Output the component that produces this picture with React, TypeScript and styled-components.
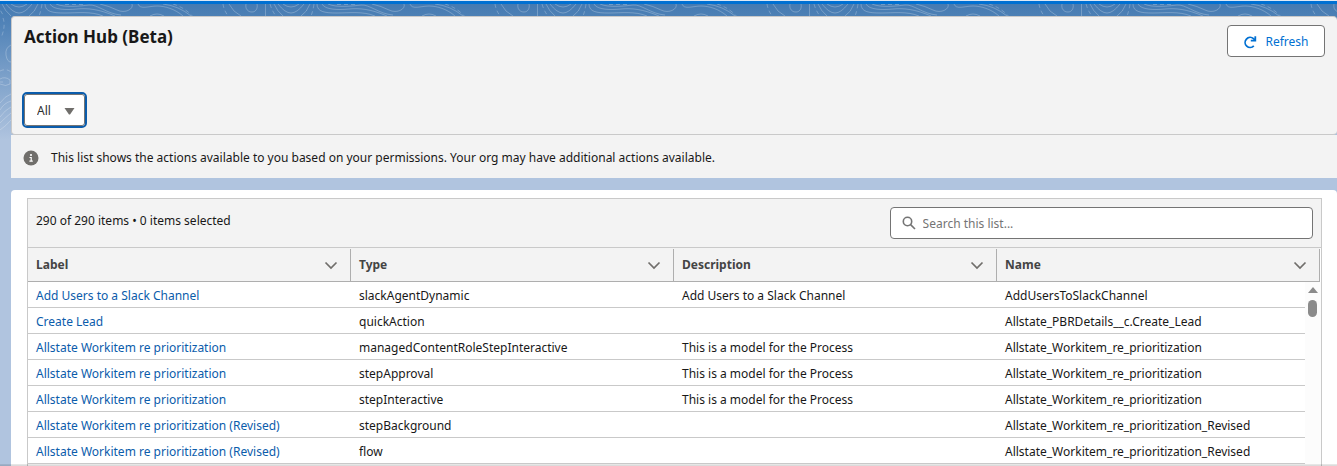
import React from "react";
import styled, { createGlobalStyle } from "styled-components";

const Global = createGlobalStyle`
  * { box-sizing: border-box; }
  body { margin: 0; background: #b0c4df; color: #181818; font: 12px/20px "Noto Sans", "Open Sans", sans-serif; }
  html, body, #root { height: 100%; }
  html, body { overflow: hidden; }
`;

const Page = styled.div`
  position: relative;
  isolation: isolate;
  height: 100%;
  display: flex;
  flex-direction: column;
  gap: 12px;
  padding-left: 11px;
`;

const Backdrop = styled.svg`
  position: absolute;
  z-index: -1;
  top: 0;
  left: 0;
  width: 100%;
  height: 140px;
`;

const BottomShade = styled.div`
  position: absolute;
  left: 0;
  right: 0;
  bottom: 0;
  height: 2px;
  background: linear-gradient(rgba(0, 0, 0, 0.08), rgba(0, 0, 0, 0.16));
`;

const TopStripe = styled.div`
  height: 4px;
  margin-left: -11px;
  border-top: 1px solid #dfe9f5;
  background: #0070d2;
`;

const PageHeader = styled.header`
  display: flex;
  justify-content: space-between;
  align-items: flex-start;
  height: 119px;
  padding: 8px 12px;
  border: 1px solid #c9c9c9;
  border-right: 0;
  border-radius: 4px;
  background: #f3f3f3;
`;

const HeaderLeft = styled.div`
  display: flex;
  flex-direction: column;
  justify-content: space-between;
  align-items: flex-start;
  height: 100%;
`;

const Title = styled.h1`
  margin: 0;
  font-size: 17px;
  line-height: 24px;
  font-weight: 700;
`;

const FilterBox = styled.div`
  position: relative;
  display: flex;
`;

const FilterSelect = styled.select`
  appearance: none;
  width: 61px;
  height: 32px;
  padding: 2px 12px 0;
  border: 1px solid #747474;
  border-radius: 3px;
  outline: 2px solid #0b5cab;
  background: #fff;
  color: #2e2e2e;
  font: inherit;
`;

const Caret = styled.svg`
  position: absolute;
  right: 10px;
  top: 14px;
  pointer-events: none;
`;

const RefreshButton = styled.button`
  display: flex;
  align-items: center;
  justify-content: center;
  gap: 8px;
  width: 98px;
  height: 32px;
  padding: 2px 0 0;
  border: 1px solid #747474;
  border-radius: 4px;
  background: #fff;
  color: #0070d2;
  font: inherit;
`;

const Notice = styled.div`
  display: flex;
  align-items: center;
  gap: 12px;
  height: 43px;
  padding: 2px 12px 0;
  background: #f3f3f3;
`;

const HeaderArea = styled.div`
  padding-top: 12px;
`;

const Card = styled.main`
  flex: 1;
  min-height: 0;
  padding: 8px 15px 0 16px;
  border-radius: 4px 4px 0 0;
  background: #fff;
`;

const ListPanel = styled.section`
  height: 100%;
  border: 1px solid #c9c9c9;
  border-bottom: 0;
`;

const Toolbar = styled.div`
  display: flex;
  justify-content: space-between;
  height: 49px;
  padding: 8px;
  border-bottom: 1px solid #c9c9c9;
  background: #f3f3f3;
`;

const Count = styled.div`
  padding-top: 4px;
`;

const SearchField = styled.label`
  display: flex;
  align-items: center;
  gap: 7px;
  width: calc(33% + 2px);
  height: 32px;
  padding: 0 11px;
  border: 1px solid #747474;
  border-radius: 4px;
  background: #fff;
`;

const SearchInput = styled.input`
  flex: 1;
  min-width: 0;
  padding: 2px 0 0;
  border: 0;
  outline: 0;
  background: transparent;
  font: inherit;
  &::placeholder { color: #747474; opacity: 1; }
`;

const TableArea = styled.div`
  position: relative;
  padding-right: 1px;
`;

const Table = styled.table`
  width: 100%;
  table-layout: fixed;
  border-collapse: separate;
  border-spacing: 0;
`;

const HeadCell = styled.th`
  height: 34px;
  padding: 0;
  border-bottom: 1px solid #aeaeae;
  background: #f3f3f3;
  color: #444;
  font-weight: 700;
  text-align: left;
`;

const HeadInner = styled.div`
  display: flex;
  align-items: center;
  justify-content: space-between;
  height: 32px;
  padding: 0 12px 0 8px;
  border-right: 1px solid #aeaeae;
`;

const Cell = styled.td`
  height: 26px;
  padding: 2px 8px 0;
  border-bottom: 1px solid #c9c9c9;
  white-space: nowrap;
`;

const RowLink = styled.a`
  color: #0b5cab;
  text-decoration: none;
`;

const ScrollTrack = styled.div`
  position: absolute;
  top: 34px;
  right: 0;
  bottom: 0;
  width: 16px;
  padding: 5px 0 0 3px;
  background: #fcfcfc;
`;

const ScrollThumb = styled.div`
  width: 9px;
  height: 17px;
  margin-top: 7px;
  border-radius: 5px;
  background: #8b8b8b;
`;

const columns = ["Label", "Type", "Description", "Name"];
const rows = [
  ["Add Users to a Slack Channel", "slackAgentDynamic", "Add Users to a Slack Channel", "AddUsersToSlackChannel"],
  ["Create Lead", "quickAction", "", "Allstate_PBRDetails__c.Create_Lead"],
  ["Allstate Workitem re prioritization", "managedContentRoleStepInteractive", "This is a model for the Process", "Allstate_Workitem_re_prioritization"],
  ["Allstate Workitem re prioritization", "stepApproval", "This is a model for the Process", "Allstate_Workitem_re_prioritization"],
  ["Allstate Workitem re prioritization", "stepInteractive", "This is a model for the Process", "Allstate_Workitem_re_prioritization"],
  ["Allstate Workitem re prioritization (Revised)", "stepBackground", "", "Allstate_Workitem_re_prioritization_Revised"],
  ["Allstate Workitem re prioritization (Revised)", "flow", "", "Allstate_Workitem_re_prioritization_Revised"],
];

export default function App() {
  return (
    <Page>
      <Global />
      <Backdrop aria-hidden="true">
        <defs>
          <linearGradient id="sky" x1="0" y1="0" x2="0" y2="1">
            <stop offset="0" stopColor="#4379b0" />
            <stop offset="0.2" stopColor="#5485b9" />
            <stop offset="1" stopColor="#b0c4df" />
          </linearGradient>
          <pattern id="contours" x="265" y="0" width="272" height="140" patternUnits="userSpaceOnUse">
            <g fill="none" stroke="#fff" strokeOpacity="0.24">
              <path d="M.5 4V16M9 4Q12 11 18 16M13 4Q20 13 26 13T39 4M18 4Q26 10 34 4M45 4Q42 12 36 16" />
              <path d="M52 4C52 12 60 13 72 13S98 11 110 16M57 4C60 10 74 10 84 9S106 9 122 16M63 4C72 8 88 6 96 5S114 14 128 15M107 4Q116 6 124 10C132 14 141 9 139 4" />
              <path d="M145 4C147 10 156 6 164 6S182 9 190 16M170 4Q186 6 198 16M157 16Q164 12 171 16M236 4Q240 12 248 16M253 4C252 9 255 12 259 12S265 8 264 4" />
              <path strokeDasharray="4 3" d="M5 4Q7 11 11 16M49 4Q48 11 46 16M180 4Q193 8 201 18M230 4Q231 11 236 17M72 4.500H92" />
            </g>
          </pattern>
        </defs>
        <rect width="100%" height="140" fill="url(#sky)" />
        <rect width="100%" height="18" fill="url(#contours)" />
        <g fill="none" stroke="#fff" strokeOpacity="0.24">
          <path d="M11 45Q5 48 6 55T11 62M0 79Q5 76 10 80V84Q6 87 0 84M0 82H3M0 103Q5 96 11 94M0 110Q4 103 11 101M0 117Q5 110 11 107M0 123Q6 117 11 113M0 130Q6 126 11 120" />
          <path strokeDasharray="4 3" d="M3 18Q6 26 1 38M0 71Q6 68 11 72" />
        </g>
      </Backdrop>
      <div>
        <TopStripe />
        <HeaderArea>
          <PageHeader>
            <HeaderLeft>
              <Title>Action Hub (Beta)</Title>
              <FilterBox>
                <FilterSelect aria-label="Filter actions"><option>All</option></FilterSelect>
                <Caret width="11" height="7" viewBox="0 0 11 7" aria-hidden="true"><path d="M.5 0h10L6 6.500H5z" fill="#706e6b" /></Caret>
              </FilterBox>
            </HeaderLeft>
            <RefreshButton type="button">
              <svg width="14" height="14" viewBox="0 0 14 14" fill="none" stroke="#0070d2" strokeWidth="1.8" aria-hidden="true">
                <path d="M10.800 10.800A5 5 0 1 1 10.500 3.700L12 5.200" />
                <path d="M12.300 1.200V5.700H7.800" />
              </svg>
              Refresh
            </RefreshButton>
          </PageHeader>
          <Notice>
            <svg width="16" height="16" viewBox="0 0 16 16" aria-hidden="true">
              <circle cx="8" cy="8" r="7.500" fill="#706e6b" />
              <circle cx="8" cy="5" r="1.100" fill="#fff" />
              <path d="M6.500 7.500H8.200V11M6.400 11.200h3.400" fill="none" stroke="#fff" strokeWidth="1.200" />
            </svg>
            This list shows the actions available to you based on your permissions. Your org may have additional actions available.
          </Notice>
        </HeaderArea>
      </div>
      <Card>
        <ListPanel>
          <Toolbar>
            <Count>290 of 290 items • 0 items selected</Count>
            <SearchField>
              <svg width="14" height="14" viewBox="0 0 14 14" fill="none" stroke="#747474" strokeWidth="1.600" aria-hidden="true">
                <circle cx="5.500" cy="5.500" r="4.200" /><path d="M8.600 8.600l4.400 4.400" />
              </svg>
              <SearchInput type="search" aria-label="Search this list" placeholder="Search this list..." />
            </SearchField>
          </Toolbar>
          <TableArea>
            <Table>
              <thead><tr>{columns.map((c) => (
                <HeadCell key={c} scope="col"><HeadInner>{c}
                  <svg width="14" height="14" viewBox="0 0 14 14" fill="none" stroke="#706e6b" strokeWidth="1.700" aria-hidden="true"><path d="M1.500 4.500L7 10 12.500 4.500" /></svg>
                </HeadInner></HeadCell>))}</tr></thead>
              <tbody>{rows.map((r, i) => (
                <tr key={i}>{r.map((v, j) => <Cell key={j}>{j === 0 ? <RowLink href="#">{v}</RowLink> : v}</Cell>)}</tr>))}</tbody>
            </Table>
            <ScrollTrack>
              <svg width="10" height="6" viewBox="0 0 10 6" display="block" aria-hidden="true"><path d="M0 6L5 0l5 6z" fill="#8b8b8b" /></svg>
              <ScrollThumb />
            </ScrollTrack>
          </TableArea>
        </ListPanel>
      </Card>
      <BottomShade />
    </Page>
  );
}
